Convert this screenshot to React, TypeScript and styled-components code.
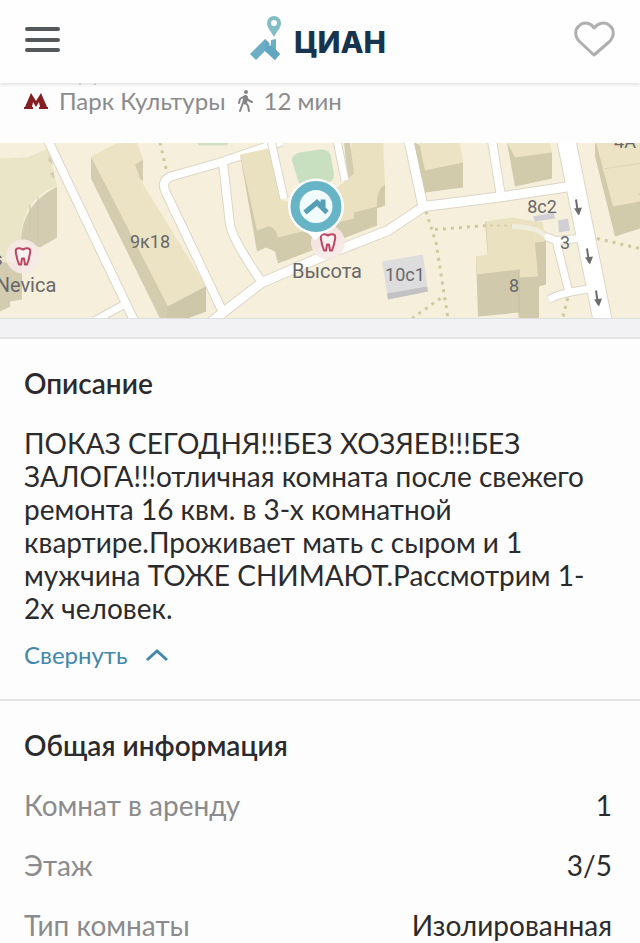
import React from "react";
import styled, { createGlobalStyle } from "styled-components";

const GlobalStyle = createGlobalStyle`
  * { box-sizing: border-box; }
  body {
    margin: 0;
    background: #fdfdfd;
    color: #2b2b2d;
    font-family: Lato, "Noto Sans", sans-serif;
  }
`;

const Page = styled.div`
  min-height: 100vh;
  background: #f2f2f4;
`;

const Header = styled.header`
  position: sticky;
  top: 0;
  z-index: 2;
  display: flex;
  align-items: center;
  justify-content: space-between;
  height: 83px;
  padding: 0 24px;
  background: #fefefe;
  box-shadow: 0 2px 3px #e4e4e4;
`;

const IconButton = styled.button`
  display: flex;
  padding: 0;
  border: 0;
  background: none;
  cursor: pointer;
`;

const Logo = styled.a`
  display: flex;
  align-items: center;
  gap: 12px;
  padding-bottom: 8px;
  color: #17344f;
  font-family: Inter, Lato, sans-serif;
  font-size: 30px;
  font-weight: 800;
  line-height: 36px;
  text-decoration: none;
`;

const LogoText = styled.span`
  padding-top: 8px;
`;

const Location = styled.section`
  height: 60px;
  padding: 0 24px;
  background: #fdfdfd;
`;

const AddressEdge = styled.svg`
  display: block;
  width: 100%;
  height: 2px;
`;

const Station = styled.p`
  display: flex;
  align-items: center;
  margin: 0;
  gap: 11px;
  color: #8b8b8d;
  font-size: 24px;
  line-height: 32px;
`;

const MapView = styled.svg`
  display: block;
  width: 100%;
  height: 176px;
  font-family: Roboto, "Noto Sans", sans-serif;
  border-bottom: 1px solid #dedee0;
`;

const Card = styled.section<{ $spaced?: boolean }>`
  margin-top: ${(p) => (p.$spaced ? "18px" : "0")};
  padding: 26px 28px 0 24px;
  background: #fdfdfd;
  border-top: 2px solid #e4e4e5;
`;

const Title = styled.h2`
  margin: 0;
  font-size: 28px;
  font-weight: 600;
  line-height: 36px;
`;

const Text = styled.p`
  max-width: 570px;
  margin: 26px 0 0;
  font-size: 28px;
  line-height: 33px;
`;

const Toggle = styled.button`
  display: flex;
  align-items: center;
  gap: 18px;
  margin: 12px 0 0;
  padding: 0 0 26px;
  border: 0;
  background: none;
  color: #4387ac;
  font: 24px/36px Lato, "Noto Sans", sans-serif;
  cursor: pointer;
`;

const Facts = styled.dl`
  display: grid;
  gap: 24px;
  margin: 24px 0 0;
  font-size: 28px;
  line-height: 36px;
`;

const Fact = styled.div`
  display: flex;
  justify-content: space-between;
`;

const Term = styled.dt`
  color: #8b8b8d;
`;

const Value = styled.dd`
  margin: 0;
`;

const Tooth = ({ x, y }: { x: number; y: number }) => (
  <g transform={`translate(${x} ${y})`}>
    <circle r="17" fill="#f6e9e6" fillOpacity="0.9" />
    <path
      d="M-7-7C-5-9-2-8 0-7C2-8 5-9 7-7C8-4 6-1 6 2L4 8L2 8L1 2H-1L-2 8L-4 8L-6 2C-6-1-8-3-7-7Z"
      fill="#fbf1ef"
      stroke="#bd4565"
      strokeWidth="2"
      strokeLinejoin="round"
    />
  </g>
);

const Arrow = ({ x, y }: { x: number; y: number }) => (
  <g transform={`translate(${x} ${y})`}>
    <path d="M-2-8L0 6" stroke="#6c6c6c" strokeWidth="2" />
    <path d="M-4 1L4 0L1 8Z" fill="#6c6c6c" />
  </g>
);

const roads = [
  { d: "M47-4L135 180", w: 8 },
  { d: "M95 178L126 161", w: 7 },
  { d: "M282-1L220 20L171 34Q161 38 165 48L223 170", w: 8 },
  { d: "M223 20L230 82Q233 98 262 140", w: 8 },
  { d: "M208 182L223 170L262 140L327 112L388 88L424 64L503 54L570 44", w: 9 },
  { d: "M409-2L423 64", w: 9 },
  { d: "M492-2L501 54", w: 8 },
  { d: "M566-4L603 180", w: 18 },
  { d: "M549 157Q560 150 594 146", w: 7 },
  { d: "M540 92L556 98L579 96M556 98L569 150", w: 7 },
];

const trails = [
  "M160 0L167 30",
  "M426 69L436 100L448 176",
  "M435 87L488 83",
  "M412 176L443 154",
  "M563 174L568 155",
  "M597 96L640 106",
];

const AreaMap = () => (
  <MapView viewBox="0 0 640 176" preserveAspectRatio="xMidYMid slice" role="img" aria-label="Карта">
    <rect width="640" height="176" fill="#f6efdb" />
    <path d="M0 16L27 15L48 6L57 43Q23 56 21 94V124L0 130Z" fill="#ebe5c8" />
    <path d="M57 44Q22 62 21 98L40 105L57 95Z" fill="#d3ccb0" />
    <path d="M50 13L48 18L53 22ZM50 31L54 37V29Z" fill="#d3ccb0" />
    <path d="M30 62V90M38 54V98" stroke="#c9c3a8" />
    <path d="M0 120H22V157L10 159V164L0 169Z" fill="#d3ccb0" />
    <rect x="198" y="-1" width="30" height="4" rx="2" fill="#d0dfc0" />

    <g stroke="#dcd6c6" fill="none" strokeLinejoin="round">
      {roads.map((r) => <path key={r.d} d={r.d} strokeWidth={r.w + 2} />)}
    </g>
    <g stroke="#fff" fill="none" strokeLinejoin="round">
      {roads.map((r) => <path key={r.d} d={r.d} strokeWidth={r.w} />)}
    </g>
    <g stroke="#cdcaa0" fill="none" strokeWidth="3" strokeDasharray="3 5">
      {trails.map((d) => <path key={d} d={d} />)}
    </g>

    <path d="M91 14V36L160 176H187L206 169V144L168 158Z" fill="#d3ccae" />
    <path d="M91 14L116 1L137 0L143 17L135 22L142 40L206 144L168 164Z" fill="#ebe3c3" />
    <path d="M168 164L206 144V169L187 176H166Z" fill="#cec7a9" />
    <path d="M135 22L143 17V39L140 36Z" fill="#d3ccae" />

    <path d="M240 12L257 109L266 105L275 109L278 121L377 83V66L385 63V42L370 30L278 84Z" fill="#d1caab" />
    <path d="M240 12L268 6L282 58L310 64L344 40L352 0H383L385 42Q376 47 377 64L354 70V76L278 95Q275 83 268 84L257 88Z" fill="#e9e1bf" />
    <path d="M344 0H350L354 31L348 36Z" fill="#d3ccae" />
    <path d="M292 18Q292 12 300 10L320 7Q329 6 331 14L334 32Q334 40 324 41H299Z" fill="#c8dfc0" />
    <path d="M271-2L284 56M337-2L345 38" stroke="#dcd6c6" strokeWidth="9" />
    <path d="M271-2L284 56M337-2L345 38" stroke="#fff" strokeWidth="7" />

    <path d="M414 0L425 50L463 45V20Z" fill="#d1caab" />
    <path d="M419 0H460L463 20L425 28Z" fill="#ebe3c3" />
    <path d="M507 0L515 44L552 36V10Z" fill="#d1caab" />
    <path d="M507 0H550L552 10L515 15Z" fill="#ebe3c3" />
    <path d="M595 0V14L615 94L640 86V50Z" fill="#d1caab" />
    <path d="M596 0H640V59L613 64Z" fill="#ebe3c3" />
    <path d="M605 26L640 21" stroke="#ded5b4" />

    <path d="M485 79L488 115L476 114L478 174L519 170L520 176H539V144L546 142V98Z" fill="#d0c9ab" />
    <path d="M486 79L512 75L543 80L545 99L535 100L538 134L519 135V127L477 132L476 114L488 112Z" fill="#e9e1bf" />
    <path d="M519 127V176" stroke="#c5bea0" />
    <path d="M512 84Q535 84 545 93" stroke="#f1eddd" strokeWidth="5" fill="none" />
    <path d="M490 83H512" stroke="#d5d0a8" strokeWidth="2" strokeDasharray="3 4" />

    <path d="M382 119L423 112L428 149L388 157Z" fill="#deddde" />
    <path d="M387 151L427 144L428 149L388 157Z" fill="#c2c1c4" />
    <path d="M533 74L554 70L555 76L535 79ZM558 78L568 76L570 88L559 90Z" fill="#d2cfd4" />

    <Arrow x={578} y={65} />
    <Arrow x={589} y={114} />
    <Arrow x={598} y={156} />

    <Tooth x={23} y={114} />
    <Tooth x={328} y={100} />

    <g fill="#68686a" fontSize="18" textAnchor="middle">
      <text x="150" y="105">9к18</text>
      <text x="405" y="138">10с1</text>
      <text x="542" y="70">8с2</text>
      <text x="565" y="106">3</text>
      <text x="514" y="149">8</text>
      <text x="625" y="5">4А</text>
      <text x="644" y="61">2</text>
      <text x="-2" y="122">s</text>
      <text x="26" y="149" fontSize="20">Nevica</text>
      <text x="327" y="135" fontSize="20">Высота</text>
    </g>

    <path d="M304 86L315 98L328 86Z" fill="#fcffff" />
    <circle cx="316" cy="64" r="28" fill="#fcffff" />
    <circle cx="316" cy="64" r="21" fill="#f1fcff" stroke="#67b4c7" strokeWidth="9" />
    <path d="M305 70L317 60L327 70M323 57V66" fill="none" stroke="#579fb6" strokeWidth="5" />
  </MapView>
);

const facts = [
  ["Комнат в аренду", "1"],
  ["Этаж", "3/5"],
  ["Тип комнаты", "Изолированная"],
];

export default function App() {
  return (
    <Page>
      <GlobalStyle />
      <Header>
        <IconButton aria-label="Меню">
          <svg width="38" height="32" viewBox="0 0 38 32" fill="none" stroke="#55585a" strokeWidth="4" strokeLinecap="round">
            <path d="M3 3H34M3 14H34M3 24H34" />
          </svg>
        </IconButton>
        <Logo href="#" aria-label="ЦИАН">
          <svg width="32" height="46" viewBox="0 0 32 46">
            <path fillRule="evenodd" d="M24 1A7 7 0 0 1 31 8C31 13 27 16 24 22C21 16 17 13 17 8A7 7 0 0 1 24 1ZM24 5A3 3 0 1 0 24 11A3 3 0 1 0 24 5Z" fill="#83bdc6" />
            <path d="M0 39L15 24L21 30V25L26 24V35L30 39L25 45L15 36L6 45Z" fill="#6caec6" />
            <path d="M15 24L26 35L30 39L25 45L15 36Z" fill="#63a6c1" />
            <path d="M20 25V31" stroke="#fefefe" strokeWidth="1" />
          </svg>
          <LogoText>ЦИАН</LogoText>
        </Logo>
        <IconButton aria-label="В избранное">
          <svg width="42" height="44" viewBox="0 0 42 44" fill="none" stroke="#afafb1" strokeWidth="3" strokeLinejoin="round">
            <path d="M20 35L6 22C0 16 1 9 5 6C10 1 17 3 20 8C24 3 31 1 36 6C40 9 41 16 35 22Z" />
          </svg>
        </IconButton>
      </Header>

      <Location>
        <AddressEdge aria-hidden="true">
          <path d="M55 0h2v2h-2zM70 0h2v2h-2z" fill="#8b8b8d" />
        </AddressEdge>
        <Station>
          <svg width="24" height="18" viewBox="0 0 24 18" aria-label="Метро">
            <path d="M0 15H1L7 1L12 9L17 1L23 15H24V17H15V15H16L15 10L12 15L9 10L8 15H9V17H0Z" fill="#861d20" />
          </svg>
          Парк Культуры
          <svg width="16" height="24" viewBox="0 0 16 24" fill="none" stroke="#858587" strokeWidth="2" strokeLinecap="round" strokeLinejoin="round" aria-label="пешком">
            <circle cx="9" cy="3" r="2" fill="#858587" stroke="none" />
            <path d="M8 7L6 14L3 22M10 8L9 14L11 17L12 22M8 7L3 10L2 14M9 7L11 11L15 13" />
            <path d="M8 8L8 14" strokeWidth="3" />
          </svg>
          12 мин
        </Station>
      </Location>

      <AreaMap />

      <Card $spaced>
        <Title>Описание</Title>
        <Text>
          ПОКАЗ СЕГОДНЯ!!!БЕЗ ХОЗЯЕВ!!!БЕЗ ЗАЛОГА!!!отличная комната после свежего ремонта 16 квм. в 3-х
          комнатной квартире.Проживает мать с сыром и 1 мужчина ТОЖЕ СНИМАЮТ.Рассмотрим 1-2х человек.
        </Text>
        <Toggle aria-expanded="true">
          Свернуть
          <svg width="22" height="14" viewBox="0 0 22 14" fill="none" stroke="#4387ac" strokeWidth="3">
            <path d="M1 12L11 3L21 12" />
          </svg>
        </Toggle>
      </Card>

      <Card>
        <Title>Общая информация</Title>
        <Facts>
          {facts.map(([term, value]) => (
            <Fact key={term}>
              <Term>{term}</Term>
              <Value>{value}</Value>
            </Fact>
          ))}
        </Facts>
      </Card>
    </Page>
  );
}
